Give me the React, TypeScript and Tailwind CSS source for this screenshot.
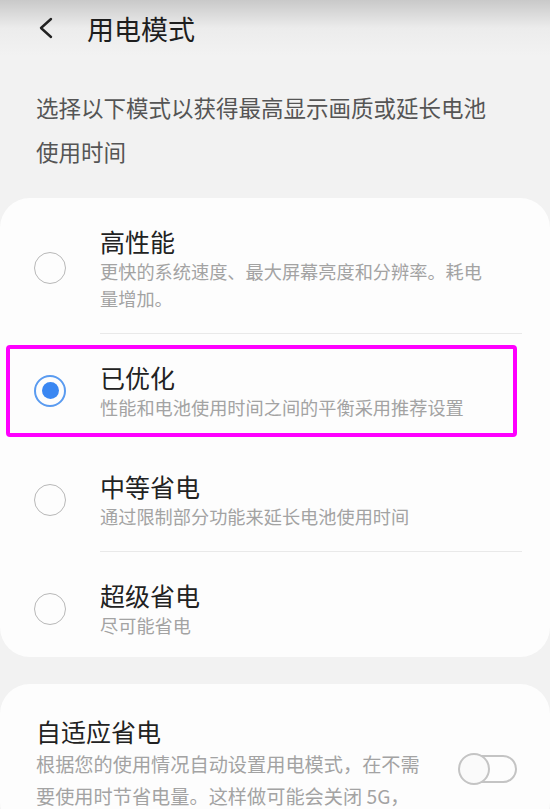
import React from "react";

type Mode = {
  title: string;
  desc: string;
  selected?: boolean;
  highlighted?: boolean;
};

const modes: Mode[] = [
  { title: "高性能", desc: "更快的系统速度、最大屏幕亮度和分辨率。耗电量增加。" },
  { title: "已优化", desc: "性能和电池使用时间之间的平衡采用推荐设置", selected: true, highlighted: true },
  { title: "中等省电", desc: "通过限制部分功能来延长电池使用时间" },
  { title: "超级省电", desc: "尽可能省电" },
];

const font = { fontFamily: '"Noto Sans CJK SC", "Noto Sans", sans-serif' };

function Radio({ checked }: { checked?: boolean }) {
  if (checked) {
    return (
      <div className="w-8 h-8 shrink-0 rounded-full border-[2px] border-[#5a9bf0] flex items-center justify-center">
        <div className="w-[17px] h-[17px] rounded-full bg-[#3a87f2]" />
      </div>
    );
  }
  return <div className="w-8 h-8 shrink-0 rounded-full border-[1.5px] border-[#b8b8b8]" />;
}

export default function App() {
  return (
    <div className="w-[550px] h-[809px] overflow-hidden bg-[#f2f2f2]" style={font}>
      {/* header */}
      <div className="h-[56px] bg-gradient-to-b from-[#c9c9c9] via-[#ececec] to-[#f2f2f2] flex items-center pl-[38px]">
        <svg width="16" height="22" viewBox="0 0 16 22">
          <polyline points="13,2 3,11 13,20" fill="none" stroke="#222" strokeWidth="2.4" strokeLinejoin="round" strokeLinecap="round" />
        </svg>
        <div className="ml-[33px] text-[27px] leading-none text-[#1e1e1e]">用电模式</div>
      </div>

      <div className="pl-[36px] pt-[29px] w-[500px] text-[22.5px] leading-[44px] text-[#555]">
        选择以下模式以获得最高显示画质或延长电池使用时间
      </div>

      {/* mode card */}
      <div className="mt-[25px] bg-[#fdfdfd] rounded-[30px]">
        {modes.map((m, i) => (
          <div key={m.title} className="relative">
            <div className={`flex items-center pl-[34px] pr-[56px] pt-[26px] ${i === modes.length - 1 ? "pb-[18px]" : "pb-[21px]"}`}>
              <Radio checked={m.selected} />
              <div className="ml-[34px] flex-1">
                <div className="text-[25px] leading-[34px] text-[#222]">{m.title}</div>
                <div className="text-[18.2px] leading-[27px] text-[#a3a3a3]">{m.desc}</div>
              </div>
            </div>
            {i < modes.length - 1 && i !== 1 && (
              <div className="ml-[100px] mr-[28px] h-px bg-[#e9e9e9]" />
            )}
            {i === 1 && <div className="h-px" />}
            {m.highlighted && (
              <div className="absolute left-[6px] top-[11px] w-[511px] h-[92px] border-[4px] border-[#ff00ff] rounded-[4px]" />
            )}
          </div>
        ))}
      </div>

      {/* adaptive card */}
      <div className="mt-[27px] bg-[#fdfdfd] rounded-[30px] pl-[36px] pr-[33px] pt-[30px] pb-[20px] flex items-center">
        <div className="flex-1">
          <div className="text-[25px] leading-[34px] text-[#222]">自适应省电</div>
          <div className="text-[19.2px] leading-[32px] text-[#a3a3a3] pr-[30px]">
            根据您的使用情况自动设置用电模式，在不需要使用时节省电量。这样做可能会关闭 5G，
          </div>
        </div>
        <div className="relative w-[59px] h-[32px] shrink-0 mt-[12px]">
          <div className="absolute right-0 top-[2px] w-[50px] h-[28px] rounded-full border-[2px] border-[#c4c4c4]" />
          <div className="absolute left-0 top-0 w-[32px] h-[32px] rounded-full border-[2px] border-[#c4c4c4] bg-[#fafafa]" />
        </div>
      </div>
    </div>
  );
}
